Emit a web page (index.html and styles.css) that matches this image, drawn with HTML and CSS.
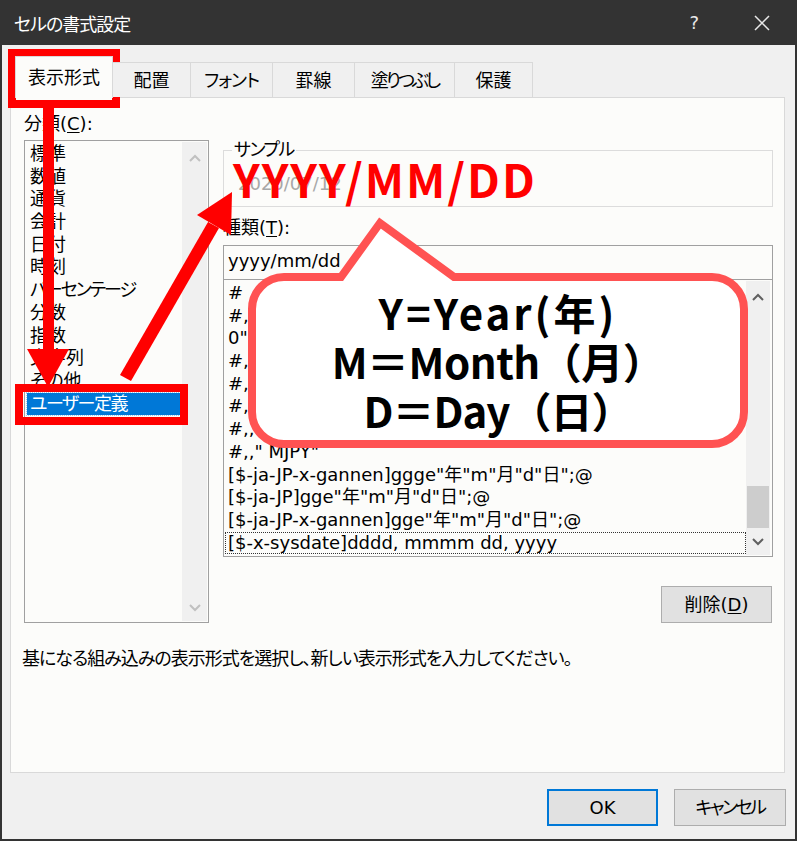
FILE: index.html
```html
<!DOCTYPE html>
<html lang="ja">
<head>
<meta charset="utf-8">
<title>セルの書式設定</title>
<link rel="stylesheet" href="styles.css">
</head>
<body>
<div class="window">
  <div class="titlebar">
    <span class="title">セルの書式設定</span>
    <span class="help">?</span>
    <svg class="close" width="16" height="16" viewBox="0 0 16 16"><path d="M1 1 L15 15 M15 1 L1 15" stroke="#e8e8e8" stroke-width="1.5" fill="none"/></svg>
  </div>
  <div class="main">
    <div class="tabs">
      <div class="tab active">表示形式</div>
      <div class="tab t78 first">配置</div>
      <div class="tab t82 kana1">フォント</div>
      <div class="tab t82">罫線</div>
      <div class="tab t100 kana3">塗りつぶし</div>
      <div class="tab t78">保護</div>
    </div>
    <div class="panel">
      <div class="cols">
        <div class="left">
          <div class="label">分類(<u>C</u>):</div>
          <div class="listbox cat">
            <div class="rows">
              <div class="row">標準</div>
              <div class="row">数値</div>
              <div class="row">通貨</div>
              <div class="row">会計</div>
              <div class="row">日付</div>
              <div class="row">時刻</div>
              <div class="row kana2">パーセンテージ</div>
              <div class="row">分数</div>
              <div class="row">指数</div>
              <div class="row">文字列</div>
              <div class="row">その他</div>
              <div class="row selected kana15">ユーザー定義</div>
            </div>
            <div class="vscroll light">
              <div class="arrow up"><svg width="12" height="8" viewBox="0 0 12 8"><path d="M1 7 L6 2 L11 7" stroke="currentColor" stroke-width="2" fill="none"/></svg></div>
              <div class="track"></div>
              <div class="arrow down"><svg width="12" height="8" viewBox="0 0 12 8"><path d="M1 1 L6 6 L11 1" stroke="currentColor" stroke-width="2" fill="none"/></svg></div>
            </div>
          </div>
        </div>
        <div class="right">
          <fieldset class="sample">
            <legend class="kana15">サンプル</legend>
            <div class="sample-val">2020/07/12</div>
          </fieldset>
          <div class="label kind">種類(<u>T</u>):</div>
          <div class="input">yyyy/mm/dd</div>
          <div class="listbox fmt">
            <div class="rows">
              <div class="row">#&nbsp;&nbsp;&nbsp;?/?</div>
              <div class="row">#,##0.00</div>
              <div class="row">0"千円"</div>
              <div class="row">#,##0,"千"</div>
              <div class="row">#,##0,,"百万"</div>
              <div class="row">#,##0,"K"</div>
              <div class="row">#,,"M"</div>
              <div class="row">#,," MJPY"</div>
              <div class="row">[$-ja-JP-x-gannen]ggge"年"m"月"d"日";@</div>
              <div class="row">[$-ja-JP]gge"年"m"月"d"日";@</div>
              <div class="row">[$-ja-JP-x-gannen]gge"年"m"月"d"日";@</div>
              <div class="row focus">[$-x-sysdate]dddd, mmmm dd, yyyy</div>
            </div>
            <div class="vscroll">
              <div class="arrow up"><svg width="12" height="8" viewBox="0 0 12 8"><path d="M1 7 L6 2 L11 7" stroke="currentColor" stroke-width="2" fill="none"/></svg></div>
              <div class="track"><div class="thumb"></div></div>
              <div class="arrow down short"><svg width="12" height="8" viewBox="0 0 12 8"><path d="M1 1 L6 6 L11 1" stroke="currentColor" stroke-width="2" fill="none"/></svg></div>
            </div>
          </div>
          <div class="del-row"><button class="btn">削除(<u>D</u>)</button></div>
        </div>
      </div>
      <div class="hint">基になる組み込みの表示形式を選択し、新しい表示形式を入力してください。</div>
    </div>
    <div class="buttons">
      <button class="btn ok">OK</button>
      <button class="btn kana25">キャンセル</button>
    </div>
  </div>
</div>

<svg class="annot" width="800" height="842" viewBox="0 0 800 842">
  <rect x="12" y="53" width="104" height="51" fill="none" stroke="#ff0000" stroke-width="8"/>
  <rect x="19" y="388" width="165" height="33" fill="none" stroke="#ff0000" stroke-width="8"/>
  <rect x="43" y="108" width="11" height="242" fill="#ff0000"/>
  <polygon points="27,349 69,349 48,387" fill="#ff0000"/>
  <polygon points="120,375 131,381 219,228 208,222" fill="#ff0000"/>
  <polygon points="232,192 197,215 231,235" fill="#ff0000"/>
  <path d="M284 277 L341 277 L380 223 L454 277 L712 277 A32 32 0 0 1 744 309 L744 412 A32 32 0 0 1 712 444 L284 444 A32 32 0 0 1 252 412 L252 309 A32 32 0 0 1 284 277 Z" fill="#ffffff" stroke="#ff5252" stroke-width="8" stroke-linejoin="miter"/>
</svg>
<div class="yyyy">YYYY/MM/DD</div>
<div class="bubble-text">
  <div class="l1">Y=Year(年)</div>
  <div class="l2">M＝Month（月）</div>
  <div class="l3">D＝Day（日）</div>
</div>
</body>
</html>
```
FILE: styles.css
```css
* { box-sizing: border-box; }
html, body { margin: 0; padding: 0; }
body {
  width: 800px;
  height: 842px;
  background: #ffffff;
  font-family: "DejaVu Sans", "Noto Sans CJK JP", sans-serif;
  font-size: 18px;
  color: #000;
  font-feature-settings: "palt" 1;
  position: relative;
  overflow: hidden;
}
.window {
  width: 797px;
  height: 841px;
  border: 2px solid #333;
  border-top: 0;
  background: #f0f0f0;
  display: flex;
  flex-direction: column;
}
.titlebar {
  height: 45px;
  flex: none;
  background: #333333;
  color: #ffffff;
  display: flex;
  align-items: center;
  padding: 0 25px 0 12px;
}
.title { flex: 1; letter-spacing: -1px; }
.help { color: #e8e8e8; margin-right: 55px; }
.close { display: block; }

.kana1 { letter-spacing: -1px; }
.kana15 { letter-spacing: -1.5px; }
.kana2 { letter-spacing: -2px; }
.kana25 { letter-spacing: -2.5px; }
.kana3 { letter-spacing: -3px; }

.main {
  flex: 1;
  display: flex;
  flex-direction: column;
  padding: 11px 0 0 8px;
}
.tabs {
  display: flex;
  align-items: flex-end;
  height: 42px;
  padding-left: 5px;
  margin-bottom: -1px;
  position: relative;
  z-index: 1;
}
.tab {
  height: 35px;
  margin-bottom: 1px;
  display: flex;
  align-items: center;
  justify-content: center;
  padding-bottom: 3px;
  background: #f0f0f0;
  border-top: 1px solid #d9d9d9;
  border-right: 1px solid #d9d9d9;
}
.tab.active {
  width: 98px;
  height: 42px;
  margin-bottom: 0;
  background: #fcfcfa;
  border-left: 1px solid #d9d9d9;
  padding-bottom: 3px;
  padding-top: 0;
}
.t78 { width: 78px; }
.t82 { width: 82px; }
.t100 { width: 100px; }

.panel {
  width: 775px;
  height: 676px;
  border: 1px solid #d9d9d9;
  background: #fcfcfa;
  padding: 15px 11px 0 13px;
}
.cols { display: flex; gap: 14px; }
.left { width: 185px; }
.right { width: 550px; }
.label { line-height: 22px; height: 22px; }
u { text-decoration: underline; text-underline-offset: 2px; }

.listbox {
  border: 1px solid #a0a0a0;
  background: #fcfcfa;
  display: flex;
}
.listbox .rows { flex: 1; padding-top: 2px; overflow: hidden; }
.row { height: 22.7px; line-height: 22.7px; white-space: nowrap; }
.cat { margin-top: 5px; height: 483px; }
.cat .row { margin-left: 2px; padding-left: 3px; }
.cat .row.selected {
  background: #0078d7;
  color: #ffffff;
  outline: 1px dotted #9cc8f0;
}
.vscroll {
  width: 25px;
  margin: 1px 1px 1px 0;
  background: #f0f0f0;
  display: flex;
  flex-direction: column;
  color: #606060;
}
.vscroll.light { color: #c0c0c0; }
.arrow { height: 32px; display: flex; align-items: center; justify-content: center; }
.arrow.down { height: 26px; }
.arrow svg { display: block; }
.track { flex: 1; display: flex; flex-direction: column; justify-content: flex-end; }
.thumb { height: 42px; margin: 0 0 1px 1px; width: 22px; background: #cdcdcd; }

.sample {
  margin: 26px 0 0 0;
  padding: 0 0 0 8px;
  border: 1px solid #dcdcdc;
  height: 68px;
}
.sample legend { padding: 0 2px; line-height: 22px; }
.sample-val { color: #a8a8a8; padding: 12px 0 0 6px; line-height: 22px; }
.kind { margin-top: 10px; }
.input {
  margin-top: 6px;
  height: 34px;
  border: 1px solid #a0a0a0;
  border-bottom: 0;
  padding-left: 4px;
  line-height: 30px;
  background: #fcfcfa;
}
.fmt { height: 278px; }
.fmt .rows { padding-left: 4px; }
.fmt .row.focus { outline: 1px dotted #333; outline-offset: -1px; margin-left: -3px; padding-left: 3px; }
.fmt .vscroll { width: 24px; margin-right: 2px; }

.del-row { display: flex; justify-content: flex-end; margin-top: 29px; padding-right: 1px; }
.btn {
  font: inherit;
  color: #000;
  height: 37px;
  width: 111px;
  background: #e1e1e1;
  border: 1px solid #adadad;
  padding: 0;
  line-height: 33px;
}
.hint { margin: 25px 0 0 -2px; line-height: 22px; letter-spacing: -1px; }

.buttons {
  display: flex;
  justify-content: flex-end;
  gap: 16px;
  margin-top: 16px;
  padding-right: 9px;
}
.buttons .btn { width: 112px; }
.btn.ok { width: 111px; border: 2px solid #0078d7; }

.annot { position: absolute; left: 0; top: 0; pointer-events: none; }
.yyyy {
  position: absolute;
  left: 233px;
  top: 161px;
  font-family: "Noto Sans CJK JP", sans-serif;
  font-weight: 700;
  font-size: 46px;
  line-height: 34px;
  letter-spacing: 2px;
  color: #ff0000;
}
.bubble-text {
  position: absolute;
  left: 252px;
  top: 287px;
  width: 492px;
  text-align: center;
  font-family: "Noto Sans CJK JP", sans-serif;
  font-feature-settings: normal;
  font-weight: 700;
  font-size: 42px;
  line-height: 49px;
  color: #000;
}
.l1 { letter-spacing: 3px; }
.l2 { letter-spacing: -0.5px; }
.l3 { letter-spacing: -1px; }
```
